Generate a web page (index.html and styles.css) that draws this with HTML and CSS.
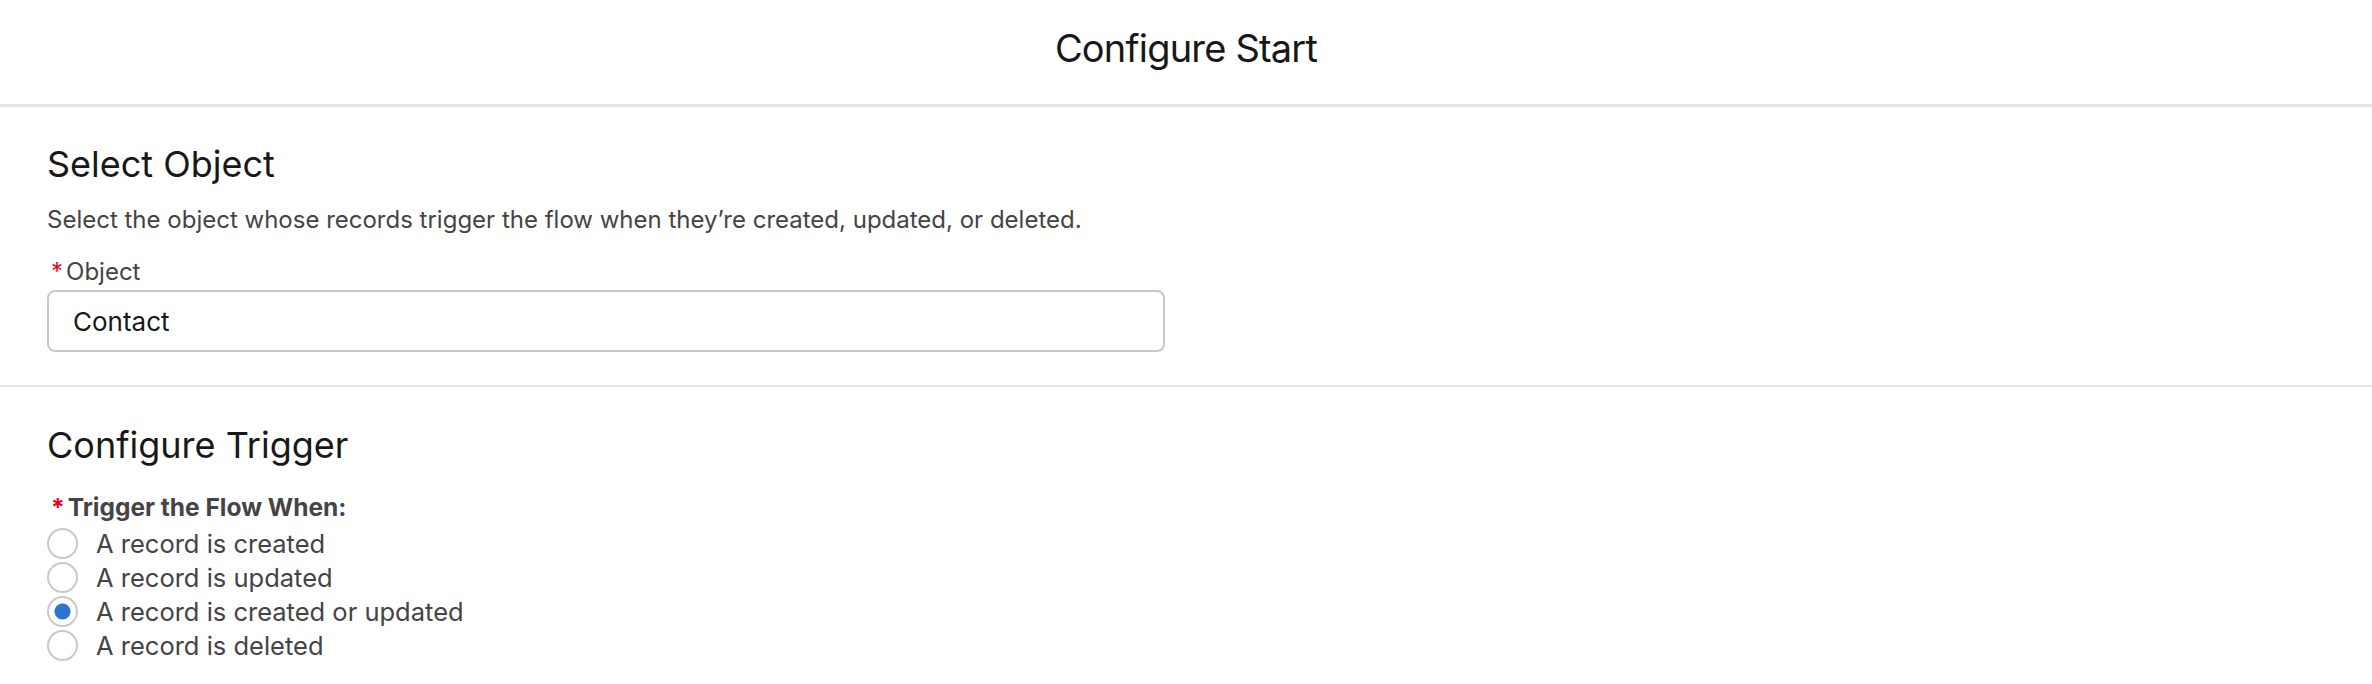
FILE: index.html
```html
<!DOCTYPE html>
<html lang="en">
<head>
    <meta charset="UTF-8">
    <meta name="viewport" content="width=device-width, initial-scale=1.0">
    <title>Configure Start</title>
    <link rel="stylesheet" href="styles.css">
</head>
<body>
    <header class="modal-header">
        <h1 class="modal-title">Configure Start</h1>
    </header>

    <!-- Object picker -->
    <section class="panel">
        <h2 class="panel-title">Select Object</h2>
        <p class="panel-help">Select the object whose records trigger the flow when they’re created, updated, or deleted.</p>
        <label class="field-label" for="object"><abbr class="required" title="required">*</abbr>Object</label>
        <input class="field-input" id="object" type="text" value="Contact">
    </section>

    <!-- Trigger options -->
    <section class="panel panel-last">
        <h2 class="panel-title title-trigger">Configure Trigger</h2>
        <fieldset class="radio-group">
            <legend class="group-label"><abbr class="required" title="required">*</abbr>Trigger the Flow When:</legend>
            <label class="radio"><input type="radio" name="trigger" value="create"><span>A record is created</span></label>
            <label class="radio"><input type="radio" name="trigger" value="update"><span>A record is updated</span></label>
            <label class="radio"><input type="radio" name="trigger" value="createupdate" checked><span>A record is created or updated</span></label>
            <label class="radio"><input type="radio" name="trigger" value="delete"><span>A record is deleted</span></label>
        </fieldset>
    </section>
</body>
</html>
```

FILE: styles.css
```css
body {
    margin: 0;
    font-family: Inter, "Noto Sans", sans-serif;
    color: #444444;
    background: #ffffff;
}

.modal-header {
    height: 104px;
    display: flex;
    align-items: center;
    justify-content: center;
    border-bottom: 3px solid #e5e5e5;
}

.modal-title {
    margin: 0;
    font-size: 38px;
    letter-spacing: -0.8px;
    font-weight: 400;
    color: #181818;
    padding-bottom: 9px;
}

.panel {
    padding: 35px 47px 33px;
    border-bottom: 2px solid #e5e5e5;
}

.panel-last {
    border-bottom: none;
    padding-top: 36px;
}

.panel-title {
    margin: 0 0 15px;
    font-size: 36px;
    line-height: 45px;
    font-weight: 400;
    color: #181818;
}

.title-trigger {
    margin-bottom: 21px;
}

.panel-help {
    margin: 0 0 16px;
    font-size: 24px;
    line-height: 36px;
}

.field-label {
    display: block;
    font-size: 24px;
    line-height: 36px;
}

.required {
    color: #ea001e;
    text-decoration: none;
    border: none;
    margin: 0 3px 0 4px;
}

.field-input {
    display: block;
    box-sizing: border-box;
    width: 1118px;
    height: 62px;
    margin: 0;
    padding: 0 24px;
    border: 2px solid #c9c9c9;
    border-radius: 8px;
    font-family: inherit;
    font-size: 26px;
    color: #181818;
    background: #fff;
    outline: none;
}

.radio-group {
    margin: 0;
    padding: 0;
    border: none;
}

.group-label {
    padding: 0 0 1px;
    font-size: 24.5px;
    line-height: 36px;
    font-weight: 700;
    color: #444444;
}

.radio {
    display: flex;
    align-items: center;
    height: 34px;
    font-size: 25.5px;
}

.radio input {
    appearance: none;
    -webkit-appearance: none;
    box-sizing: border-box;
    width: 31px;
    height: 31px;
    margin: 0 18px 0 0;
    border: 2px solid #c9c9c9;
    border-radius: 50%;
    background: #fff;
}

.radio input:checked {
    background: radial-gradient(circle, #2e73d0 0 7.5px, #fff 8.5px);
}
```
